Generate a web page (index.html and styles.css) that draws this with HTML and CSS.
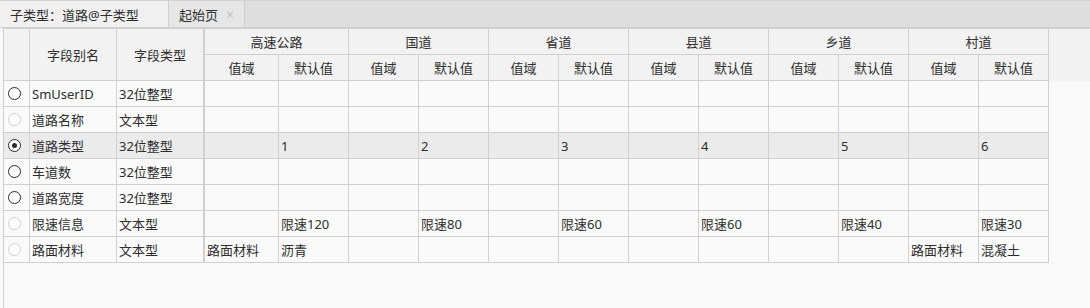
FILE: index.html
```html
<!DOCTYPE html>
<html lang="zh-CN">
<head>
    <meta charset="UTF-8">
    <title>子类型：道路@子类型</title>
    <link rel="stylesheet" href="styles.css">
</head>
<body>
    <div class="tab-bar">
        <div class="tab active">子类型：道路@子类型</div>
        <div class="tab">起始页<span class="tab-close">×</span></div>
    </div>

    <div class="grid-wrap">
        <table class="subtype-grid">
            <colgroup>
                <col class="c-radio">
                <col class="c-name">
                <col class="c-type">
                <col class="c-first">
                <col class="c-val"><col class="c-val"><col class="c-val">
                <col class="c-val"><col class="c-val"><col class="c-val">
                <col class="c-val"><col class="c-val"><col class="c-val">
                <col class="c-val"><col class="c-val">
                <col class="c-fill">
            </colgroup>
            <thead>
                <tr>
                    <th rowspan="2" class="radio-cell"></th>
                    <th rowspan="2">字段别名</th>
                    <th rowspan="2" class="sep">字段类型</th>
                    <th colspan="2">高速公路</th>
                    <th colspan="2">国道</th>
                    <th colspan="2">省道</th>
                    <th colspan="2">县道</th>
                    <th colspan="2">乡道</th>
                    <th colspan="2">村道</th>
                    <th rowspan="2" class="fill"></th>
                </tr>
                <tr>
                    <th>值域</th><th>默认值</th>
                    <th>值域</th><th>默认值</th>
                    <th>值域</th><th>默认值</th>
                    <th>值域</th><th>默认值</th>
                    <th>值域</th><th>默认值</th>
                    <th>值域</th><th>默认值</th>
                </tr>
            </thead>
            <tbody>
                <tr>
                    <td class="radio-cell"><span class="radio"></span></td>
                    <td>SmUserID</td><td class="sep">32位整型</td>
                    <td></td><td></td><td></td><td></td><td></td><td></td>
                    <td></td><td></td><td></td><td></td><td></td><td></td>
                    <td class="fill"></td>
                </tr>
                <tr>
                    <td class="radio-cell"><span class="radio disabled"></span></td>
                    <td>道路名称</td><td class="sep">文本型</td>
                    <td></td><td></td><td></td><td></td><td></td><td></td>
                    <td></td><td></td><td></td><td></td><td></td><td></td>
                    <td class="fill"></td>
                </tr>
                <tr class="selected">
                    <td class="radio-cell"><span class="radio checked"></span></td>
                    <td>道路类型</td><td class="sep">32位整型</td>
                    <td></td><td>1</td><td></td><td>2</td><td></td><td>3</td>
                    <td></td><td>4</td><td></td><td>5</td><td></td><td>6</td>
                    <td class="fill"></td>
                </tr>
                <tr>
                    <td class="radio-cell"><span class="radio"></span></td>
                    <td>车道数</td><td class="sep">32位整型</td>
                    <td></td><td></td><td></td><td></td><td></td><td></td>
                    <td></td><td></td><td></td><td></td><td></td><td></td>
                    <td class="fill"></td>
                </tr>
                <tr>
                    <td class="radio-cell"><span class="radio"></span></td>
                    <td>道路宽度</td><td class="sep">32位整型</td>
                    <td></td><td></td><td></td><td></td><td></td><td></td>
                    <td></td><td></td><td></td><td></td><td></td><td></td>
                    <td class="fill"></td>
                </tr>
                <tr>
                    <td class="radio-cell"><span class="radio disabled"></span></td>
                    <td>限速信息</td><td class="sep">文本型</td>
                    <td></td><td>限速120</td><td></td><td>限速80</td><td></td><td>限速60</td>
                    <td></td><td>限速60</td><td></td><td>限速40</td><td></td><td>限速30</td>
                    <td class="fill"></td>
                </tr>
                <tr>
                    <td class="radio-cell"><span class="radio disabled"></span></td>
                    <td>路面材料</td><td class="sep">文本型</td>
                    <td>路面材料</td><td>沥青</td><td></td><td></td><td></td><td></td>
                    <td></td><td></td><td></td><td></td><td>路面材料</td><td>混凝土</td>
                    <td class="fill"></td>
                </tr>
            </tbody>
        </table>
    </div>
</body>
</html>
```

FILE: styles.css
```css
* {
    box-sizing: border-box;
}

body {
    margin: 0;
    padding: 0;
    width: 1090px;
    height: 308px;
    overflow: hidden;
    background-color: #f9f9f9;
    font-family: 'Noto Sans', 'Noto Sans CJK SC', sans-serif;
    font-size: 13px;
    color: #2e2e2e;
}

/* Tabs */
.tab-bar {
    display: flex;
    height: 28px;
    background-color: #dedede;
    border-top: 1px solid #d2d2d2;
    border-bottom: 1px solid #d0d0d0;
}

.tab {
    display: flex;
    align-items: center;
    flex-shrink: 0;
    padding: 0 10px;
    background-color: #e6e6e6;
    border-right: 1px solid #cfcfcf;
    white-space: nowrap;
}

.tab.active {
    width: 169px;
    background-color: #f0f0f0;
}

.tab-close {
    margin-left: 8px;
    color: #c4c4c4;
    font-size: 14px;
}

/* Grid */
.grid-wrap {
    height: 280px;
    margin-left: 3px;
    border-left: 1px solid #cdcdcd;
}

.subtype-grid {
    width: 1086px;
    table-layout: fixed;
    border-collapse: separate;
    border-spacing: 0;
    border-top: 1px solid #d0d0d0;
}

.c-radio { width: 26px; }
.c-name  { width: 87px; }
.c-type  { width: 88px; }
.c-first { width: 74px; }
.c-val   { width: 70px; }
.c-fill  { width: 41px; }

th, td {
    height: 26px;
    padding: 0 3px;
    border-right: 1px solid #d0d0d0;
    border-bottom: 1px solid #d0d0d0;
    white-space: nowrap;
    overflow: hidden;
    line-height: 18px;
}

th {
    background-color: #f2f2f2;
    font-weight: normal;
    text-align: center;
}

td {
    background-color: #fafafa;
    text-align: left;
    padding-left: 2px;
}

.sep {
    border-right-width: 2px;
}

th.fill {
    border-right: none;
    border-bottom: none;
}

td.fill {
    background: transparent;
    border: none;
}

tr.selected td {
    background-color: #ebebeb;
}

tr.selected td.fill {
    background: transparent;
}

.radio-cell {
    padding: 0;
    text-align: left;
}

.radio {
    display: block;
    position: relative;
    width: 13px;
    height: 13px;
    margin-left: 4px;
    border: 1px solid #2b2b2b;
    border-radius: 50%;
    background-color: #fff;
}

.radio.disabled {
    border-color: #cfcfcf;
}

.radio.checked::after {
    content: '';
    position: absolute;
    left: 3px;
    top: 3px;
    width: 5px;
    height: 5px;
    border-radius: 50%;
    background-color: #2b2b2b;
}
```
